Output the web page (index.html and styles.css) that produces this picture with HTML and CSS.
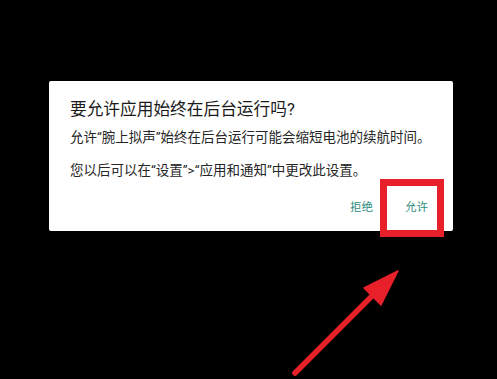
FILE: index.html
```html
<!DOCTYPE html>
<html lang="zh-CN">
<head>
<meta charset="utf-8">
<link rel="stylesheet" href="styles.css">
</head>
<body>
<div class="screen">
  <div class="dialog">
    <h1 class="title">要允许应用始终在后台运行吗?</h1>
    <p class="msg">允许“腕上拟声”始终在后台运行可能会缩短电池的续航时间。</p>
    <p class="msg msg-gap">您以后可以在“设置”&gt;“应用和通知”中更改此设置。</p>
    <div class="actions">
      <span class="btn">拒绝</span>
      <span class="btn btn-allow">允许</span>
    </div>
  </div>
  <div class="highlight"></div>
  <svg class="arrow" width="497" height="379" viewBox="0 0 497 379">
    <line x1="295" y1="373" x2="372" y2="296" stroke="#e8202a" stroke-width="5.5" stroke-linecap="round"/>
    <polygon points="398,271 364,288 381,305" fill="#e8202a" stroke="#e8202a" stroke-width="1.5" stroke-linejoin="round"/>
  </svg>
</div>
</body>
</html>
```
FILE: styles.css
```css
html, body {
  margin: 0;
  padding: 0;
  background: #000;
}
.screen {
  position: relative;
  width: 497px;
  height: 379px;
  overflow: hidden;
  padding-top: 81px;
  box-sizing: border-box;
  font-family: Roboto, "Noto Sans CJK SC", sans-serif;
}
.dialog {
  margin-left: 49px;
  width: 404px;
  height: 150px;
  box-sizing: border-box;
  background: #fff;
  border-radius: 2px;
  padding: 17px 25px 0 21px;
}
.title {
  margin: 0;
  font-size: 16.7px;
  line-height: 24px;
  font-weight: 400;
  color: #1a1a1a;
  white-space: nowrap;
}
.msg {
  margin: 5px 0 0;
  font-size: 13.5px;
  line-height: 20px;
  color: #262626;
  white-space: nowrap;
}
.msg-gap {
  margin-top: 13px;
}
.actions {
  display: flex;
  justify-content: flex-end;
  gap: 32px;
  margin-top: 17px;
}
.btn {
  font-size: 11.5px;
  line-height: 20px;
  color: #2c8c80;
}
.highlight {
  position: absolute;
  left: 380px;
  top: 179px;
  width: 64px;
  height: 58px;
  box-sizing: border-box;
  border: 7px solid #e8202a;
}
.arrow {
  position: absolute;
  left: 0;
  top: 0;
}
```
